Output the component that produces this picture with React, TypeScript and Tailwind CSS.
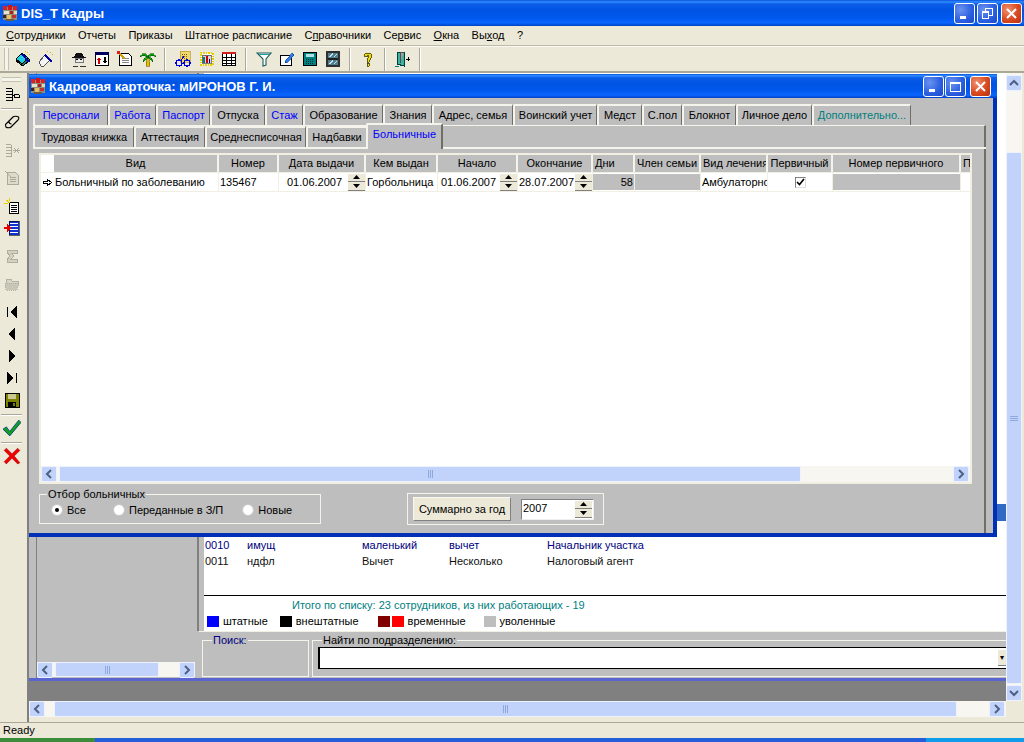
import type { ReactNode } from 'react';

const captionBar =
  'bg-[linear-gradient(to_bottom,#0a50d8_0%,#2f8bff_7%,#0a5ce8_16%,#0054e3_40%,#0058ee_70%,#0a66ff_88%,#0040c0_100%)]';

// small pixel-style icons, 16x16
const Px = ({ children, size = 16 }: { children: ReactNode; size?: number }) => (
  <svg width={size} height={size} viewBox="0 0 16 16" shapeRendering="crispEdges" className="block shrink-0">
    {children}
  </svg>
);

const AppIcon = () => (
  <Px>
    <rect x="1" y="2" width="14" height="13" fill="#8d8d7a" />
    <rect x="1" y="1" width="4" height="4" fill="#e02020" />
    <rect x="6" y="0" width="4" height="5" fill="#d01818" />
    <rect x="11" y="1" width="4" height="4" fill="#e02020" />
    <rect x="2" y="6" width="5" height="3" fill="#e8e0d0" />
    <rect x="8" y="6" width="3" height="3" fill="#b02020" />
    <rect x="12" y="6" width="3" height="3" fill="#e8d8a0" />
    <rect x="1" y="10" width="3" height="3" fill="#402020" />
    <rect x="5" y="10" width="4" height="4" fill="#e8c060" />
    <rect x="10" y="10" width="4" height="3" fill="#c03030" />
    <rect x="4" y="14" width="8" height="2" fill="#6a5a4a" />
  </Px>
);

const icons: Record<string, ReactNode> = {
  stack: (
    <>
      <path d="M1 10 L8 3 L15 9 L8 15 Z" fill="#1c7c7c" stroke="#000" />
      <path d="M1 8 L7 2 L13 7 L7 13 Z" fill="#20d0e0" stroke="#000" />
      <path d="M7 3 L14 11" stroke="#0000a0" strokeWidth="2" />
      <rect x="12" y="1" width="1" height="1" fill="#e0b000" />
      <rect x="14" y="3" width="1" height="1" fill="#e0b000" />
      <rect x="10" y="0" width="1" height="1" fill="#e0b000" />
    </>
  ),
  wand: (
    <>
      <path d="M1 11 L7 4 L12 9 L6 15 L3 15 Z" fill="#f4f4f4" stroke="#555" />
      <path d="M7 4 L14 11" stroke="#0000a0" strokeWidth="2" />
      <rect x="12" y="1" width="1" height="1" fill="#e0b000" />
      <rect x="14" y="3" width="1" height="1" fill="#e0b000" />
      <rect x="9" y="0" width="1" height="1" fill="#e0b000" />
    </>
  ),
  person: (
    <>
      <path d="M3 6 L5 2 H11 L13 6 H15 V7 H1 V6 Z" fill="#111" />
      <rect x="4" y="7" width="8" height="4" fill="#eee" stroke="#777" />
      <rect x="5" y="8" width="2" height="1" fill="#000" />
      <rect x="9" y="8" width="2" height="1" fill="#000" />
      <path d="M2 15 H7 M9 15 H15" stroke="#333" />
    </>
  ),
  arrows: (
    <>
      <rect x="1.5" y="1.5" width="13" height="13" fill="#fff" stroke="#000" />
      <rect x="1" y="1" width="14" height="3" fill="#000060" />
      <path d="M5 6 L3 9 H7 Z M4 9 H6 V13 H4 Z" fill="#d00000" />
      <path d="M10 6 H12 V10 H10 Z M9 10 H13 L11 13 Z" fill="#000" />
    </>
  ),
  docpen: (
    <>
      <path d="M2.5 2.5 H11.5 L14.5 5.5 V14.5 H2.5 Z" fill="#fff" stroke="#000" />
      <path d="M5 7 H12 M5 9 H12 M5 11 H12" stroke="#888" />
      <path d="M1 1 L8 8" stroke="#d0a000" strokeWidth="2" />
      <rect x="0" y="0" width="3" height="3" fill="#e02020" />
    </>
  ),
  palm: (
    <>
      <path d="M7 6 H9 L10 15 H6 Z" fill="#e0c000" stroke="#604000" strokeWidth="0.5" />
      <path d="M8 5 C5 1 2 2 0 6 C3 4 5 5 8 6 Z M8 5 C11 1 14 2 16 6 C13 4 11 5 8 6 Z" fill="#00a000" stroke="#004000" strokeWidth="0.5" />
      <path d="M8 6 C5 6 3 8 3 11 C5 9 6 8 8 7 Z M8 6 C11 6 13 8 13 11 C11 9 10 8 8 7 Z" fill="#10c020" stroke="#004000" strokeWidth="0.5" />
    </>
  ),
  glasses: (
    <>
      <rect x="5" y="0" width="10" height="11" fill="#f0d870" stroke="#a08000" strokeWidth="0.5" />
      <path d="M7 3 H13 M7 5 H13 M7 7 H13" stroke="#806000" strokeDasharray="1 1" />
      <circle cx="4" cy="12" r="3" fill="none" stroke="#0000e0" strokeWidth="1.2" />
      <circle cx="12" cy="12" r="3" fill="none" stroke="#0000e0" strokeWidth="1.2" />
      <path d="M6 10 L9 5 M7 12 H9" stroke="#0000e0" />
    </>
  ),
  chart: (
    <>
      <rect x="2.5" y="1.5" width="12" height="12" fill="#fff" stroke="#e8d000" strokeWidth="2" strokeDasharray="1.5 1" />
      <rect x="4" y="4" width="9" height="8" fill="#d8d8d8" stroke="#000" strokeWidth="0.5" />
      <rect x="5" y="6" width="2" height="6" fill="#008080" />
      <rect x="8" y="5" width="2" height="7" fill="#d00000" />
      <rect x="11" y="8" width="1" height="4" fill="#000080" />
    </>
  ),
  table: (
    <>
      <rect x="1.5" y="1.5" width="13" height="13" fill="#fff" stroke="#000" />
      <rect x="1" y="1" width="14" height="2" fill="#d02020" />
      <path d="M5.5 3 V14 M10.5 3 V14 M2 6.5 H14 M2 9.5 H14 M2 12.5 H14" stroke="#000" />
    </>
  ),
  funnel: (
    <>
      <path d="M1 2 H15 L10 8 V14 L7 15 V8 Z" fill="#fff" stroke="#1c5c5c" shapeRendering="auto" strokeWidth="1.1" />
      <path d="M3 3 H13" stroke="#20a0a0" />
    </>
  ),
  pagepen: (
    <>
      <rect x="1.5" y="4.5" width="11" height="10" fill="#fff" stroke="#000" />
      <path d="M7 9 L13 2 L15 4 L9 11 L6 12 Z" fill="#3080e0" stroke="#003090" strokeWidth="0.6" />
    </>
  ),
  calc: (
    <>
      <rect x="1.5" y="1.5" width="13" height="13" fill="#008080" stroke="#000" />
      <rect x="4" y="3" width="8" height="3" fill="#b0e0e0" />
      <path d="M4 8 H12 M4 10 H12 M4 12 H12" stroke="#003030" strokeDasharray="1 1" />
    </>
  ),
  panes: (
    <>
      <rect x="1" y="0" width="14" height="16" fill="#303030" />
      <rect x="3" y="2" width="10" height="12" fill="#508090" />
      <rect x="3" y="7" width="10" height="2" fill="#202020" />
      <path d="M4 6 L8 3 M9 6 L12 3 M4 13 L8 10 M9 13 L12 10" stroke="#c0e0f0" strokeWidth="1.4" />
    </>
  ),
  help: (
    <path d="M4 5 C4 1 12 1 12 5 C12 8 9 8 9 11 H7 C7 7 9 7 9 5 C9 4 7 4 7 6 Z M7 12 H9 V15 H7 Z" fill="#f0e000" stroke="#403800" strokeWidth="0.8" />
  ),
  door: (
    <>
      <path d="M2 1 H9 V15 L2 13 Z" fill="#40b0a0" stroke="#004040" />
      <path d="M9 1 H5 V12" fill="#a0a0a0" stroke="#505050" />
      <path d="M11 8 H15 M13 6 V10" stroke="#000" />
      <path d="M0 15 H4" stroke="#008080" />
    </>
  ),
  tree: (
    <path d="M2 2.5 H8 M2 5.5 H8 M2 8.5 H8 M2 11.5 H8 M2 14.5 H8 M8 2.5 V14.5 M8 9.5 H10 M10 8.5 H15 M10 11.5 H15 M10 8.5 V11.5 M15 8.5 V11.5" stroke="#000" fill="none" />
  ),
  eraser: (
    <path d="M1.5 10.5 L9 3 C10 2 13 2 14.5 3 C15 4 15 5 14 6 L7 13 C6 14 3 14 2 13 C1.5 12.5 1.5 11 1.5 10.5 Z M5 7.5 C5 9 6 10 7.5 10" fill="none" stroke="#000" strokeWidth="1.1" shapeRendering="auto" />
  ),
  treeOff: (
    <path d="M2 2.5 H7 M2 5.5 H7 M2 8.5 H7 M2 11.5 H7 M2 14.5 H7 M7 2.5 V14.5 M10 6 L15 11 M15 6 L10 11 M9 8.5 H16" stroke="#aaa99a" fill="none" />
  ),
  docOff: (
    <>
      <path d="M3.5 2.5 H11.5 L14.5 5.5 V14.5 H3.5 Z" fill="#dedbca" stroke="#aaa99a" />
      <path d="M6 7 H12 M6 9 H12 M6 11 H12 M1 1 L8 8" stroke="#aaa99a" />
    </>
  ),
  newdoc: (
    <>
      <path d="M5.5 4.5 H14.5 V15.5 H5.5 Z" fill="#fff" stroke="#000" />
      <path d="M7 7 H13 M7 9 H13 M7 11 H13 M7 13 H13" stroke="#000" />
      <path d="M2 2 L6 5 M5 0 L6 3 M0 5 L4 6" stroke="#e8d000" />
    </>
  ),
  addlist: (
    <>
      <rect x="5" y="1" width="10" height="14" fill="#1030d0" stroke="#000" strokeWidth="0.6" />
      <path d="M6 3.5 H14 M6 6.5 H14 M6 9.5 H14 M6 12.5 H14" stroke="#fff" />
      <path d="M0 7 H3 V4 L7 8 L3 12 V9 H0 Z" fill="#e00000" />
    </>
  ),
  sigma: <path d="M3 2 H13 V5 H7 L10 8 L7 11 H13 V14 H3 V12 L6 8 L3 4 Z" fill="#d4d1c0" stroke="#b0ae9e" />,
  folderOff: (
    <>
      <path d="M2 3 H7 L8 5 H14 V7 H2 Z" fill="#d8d5c4" stroke="#b4b2a2" />
      <path d="M1 7 H15 L13 14 H2 Z" fill="#c8c6b6" stroke="#b4b2a2" strokeDasharray="1 1" />
    </>
  ),
  first: <path d="M3 3 H4 V13 H3 Z M13 2 V14 L6 8 Z" fill="#000" />,
  prev: <path d="M11 2 V14 L4 8 Z" fill="#000" />,
  next: <path d="M5 2 V14 L12 8 Z" fill="#000" />,
  last: <path d="M12 3 H13 V13 H12 Z M3 2 V14 L10 8 Z" fill="#000" />,
  floppy: (
    <>
      <rect x="1" y="1" width="14" height="14" fill="#808000" stroke="#000" />
      <rect x="4" y="2" width="8" height="5" fill="#c8c890" />
      <rect x="4" y="10" width="8" height="5" fill="#000" />
      <rect x="9" y="11" width="2" height="3" fill="#808000" />
    </>
  ),
  check: <path d="M0 9 L3 7 L6 11 L14 1 L16 3 L6 15 Z" fill="#10a020" stroke="#003080" strokeWidth="0.7" shapeRendering="auto" />,
  cross: <path d="M1 3 L3 1 L8 6 L13 1 L15 3 L10 8 L15 14 L13 15 L8 10 L3 15 L1 13 L6 8 Z" fill="#f00000" stroke="#900000" strokeWidth="0.4" shapeRendering="auto" />,
};

const WinBtn = ({ kind, mark }: { kind: 'blue' | 'red'; mark: 'min' | 'max' | 'restore' | 'close' }) => (
  <div
    className={`w-[21px] h-[21px] rounded-[3px] border border-white flex items-center justify-center ${
      kind === 'red'
        ? 'bg-[radial-gradient(circle_at_30%_30%,#f09070,#d84a20_55%,#b83010)]'
        : 'bg-[radial-gradient(circle_at_30%_30%,#6a92ef,#2a5ee0_60%,#1a48c8)]'
    }`}
  >
    <svg width="13" height="13" viewBox="0 0 13 13" shapeRendering="crispEdges">
      {mark === 'min' && <rect x="2" y="9" width="6" height="3" fill="#fff" />}
      {mark === 'max' && <path d="M1.5 3.5 H11.5 V11.5 H1.5 Z M1 2.5 H12" fill="none" stroke="#fff" />}
      {mark === 'restore' && <path d="M1.5 5.5 H7.5 V11.5 H1.5 Z M1 4.5 H8 M4.5 4 V1.5 H11.5 V8 H8 M4 1 H12" fill="none" stroke="#fff" />}
      {mark === 'close' && <path d="M2 2 L11 11 M11 2 L2 11" stroke="#fff" strokeWidth="2" shapeRendering="auto" />}
    </svg>
  </div>
);

const Chevron = ({ dir }: { dir: 'left' | 'right' | 'up' | 'down' }) => {
  const d = {
    left: 'M7 1 L3 5 L7 9',
    right: 'M3 1 L7 5 L3 9',
    up: 'M1 7 L5 3 L9 7',
    down: 'M1 3 L5 7 L9 3',
  }[dir];
  return (
    <svg width="10" height="10" viewBox="0 0 10 10">
      <path d={d} fill="none" stroke="#4d6185" strokeWidth="2" />
    </svg>
  );
};

const ScrollBtn = ({ dir }: { dir: 'left' | 'right' | 'up' | 'down' }) => (
  <div className="w-[16px] h-[16px] shrink-0 rounded-[2px] border border-[#eef2ff] bg-[#c1d3fb] flex items-center justify-center">
    <Chevron dir={dir} />
  </div>
);

const Grip = ({ vertical = false }: { vertical?: boolean }) => (
  <svg width={vertical ? 8 : 7} height={vertical ? 7 : 8} viewBox={vertical ? '0 0 8 7' : '0 0 7 8'} shapeRendering="crispEdges">
    {vertical ? (
      <path d="M0 1.5 H8 M0 3.5 H8 M0 5.5 H8" stroke="#8fa8e0" />
    ) : (
      <path d="M1.5 0 V8 M3.5 0 V8 M5.5 0 V8" stroke="#8fa8e0" />
    )}
  </svg>
);

const Spin = () => (
  <div className="w-[17px] h-[17px] flex flex-col shrink-0">
    <div className="h-[8px] bg-[#ece9d8] border-b border-[#808080] flex items-center justify-center">
      <svg width="7" height="4" viewBox="0 0 7 4"><path d="M3.5 0 L7 4 H0 Z" fill="#000" /></svg>
    </div>
    <div className="h-[9px] bg-[#ece9d8] border-b border-[#808080] flex items-center justify-center">
      <svg width="7" height="4" viewBox="0 0 7 4"><path d="M0 0 H7 L3.5 4 Z" fill="#000" /></svg>
    </div>
  </div>
);

const menu: { pre: string; u: string; post: string }[] = [
  { pre: '', u: 'С', post: 'отрудники' },
  { pre: 'Отчеты', u: '', post: '' },
  { pre: 'Приказы', u: '', post: '' },
  { pre: 'Штатное расписание', u: '', post: '' },
  { pre: 'С', u: 'п', post: 'равочники' },
  { pre: 'Се', u: 'р', post: 'вис' },
  { pre: '', u: 'О', post: 'кна' },
  { pre: 'Вы', u: 'х', post: 'од' },
  { pre: '?', u: '', post: '' },
];

const tabsTop = [
  { t: 'Персонали', w: 'w-[75px]', c: 'text-[#0000ff]' },
  { t: 'Работа', w: 'w-[48px]', c: 'text-[#0000ff]' },
  { t: 'Паспорт', w: 'w-[54px]', c: 'text-[#0000ff]' },
  { t: 'Отпуска', w: 'w-[55px]', c: 'text-black' },
  { t: 'Стаж', w: 'w-[38px]', c: 'text-[#0000ff]' },
  { t: 'Образование', w: 'w-[80px]', c: 'text-black' },
  { t: 'Знания', w: 'w-[49px]', c: 'text-black' },
  { t: 'Адрес, семья', w: 'w-[81px]', c: 'text-black' },
  { t: 'Воинский учет', w: 'w-[84px]', c: 'text-black' },
  { t: 'Медст', w: 'w-[45px]', c: 'text-black' },
  { t: 'С.пол', w: 'w-[40px]', c: 'text-black' },
  { t: 'Блокнот', w: 'w-[54px]', c: 'text-black' },
  { t: 'Личное дело', w: 'w-[76px]', c: 'text-black' },
  { t: 'Дополнительно...', w: 'w-[99px]', c: 'text-[#008080]' },
];

const tabsSub = [
  { t: 'Трудовая книжка', w: 'w-[101px]' },
  { t: 'Аттестация', w: 'w-[71px]' },
  { t: 'Среднесписочная', w: 'w-[101px]' },
  { t: 'Надбавки', w: 'w-[61px]' },
];

const Tab = ({ t, w, c = 'text-black', h = 'h-[21px]' }: { t: string; w: string; c?: string; h?: string }) => (
  <div
    className={`${w} ${h} ${c} shrink-0 rounded-t-[2px] border-t-2 border-l-2 border-r border-t-[#f4f3ec] border-l-[#f4f3ec] border-r-[#6f6f66] flex items-center justify-center whitespace-nowrap overflow-hidden`}
  >
    {t}
  </div>
);

const columns = [
  { t: 'Вид', w: 'w-[165px]', a: 'justify-center' },
  { t: 'Номер', w: 'w-[60px]', a: 'justify-center' },
  { t: 'Дата выдачи', w: 'w-[87px]', a: 'justify-center' },
  { t: 'Кем выдан', w: 'w-[72px]', a: 'justify-center' },
  { t: 'Начало', w: 'w-[80px]', a: 'justify-center' },
  { t: 'Окончание', w: 'w-[75px]', a: 'justify-center' },
  { t: 'Дни', w: 'w-[42px]', a: 'justify-start pl-[2px]' },
  { t: 'Член семьи', w: 'w-[66px]', a: 'justify-start pl-[2px]' },
  { t: 'Вид лечения', w: 'w-[67px]', a: 'justify-start pl-[2px]' },
  { t: 'Первичный', w: 'w-[65px]', a: 'justify-center' },
  { t: 'Номер первичного', w: 'w-[128px]', a: 'justify-center' },
  { t: 'П', w: 'w-[13px]', a: 'justify-start pl-[2px]' },
];

const Cell = ({ w, className = '', children }: { w: string; className?: string; children?: ReactNode }) => (
  <div className={`${w} shrink-0 h-full border-r border-[#f1efe2] flex items-center overflow-hidden whitespace-nowrap ${className}`}>
    {children}
  </div>
);

const GrayFill = ({ children }: { children?: ReactNode }) => (
  <div className="w-full h-[16px] bg-[#bebebe] flex items-center justify-end pr-[1px]">{children}</div>
);

const Group = ({ legend, w, className = '', legendClass = 'text-black left-[7px]', children }: { legend: string; w: string; className?: string; legendClass?: string; children?: ReactNode }) => (
  <div className={`${w} relative border border-[#f4f3ec] ${className}`}>
    <span className={`absolute -top-[7px] bg-[#bebebe] px-px leading-[12px] ${legendClass}`}>{legend}</span>
    {children}
  </div>
);

const Radio = ({ on = false, label, className = '' }: { on?: boolean; label: string; className?: string }) => (
  <div className={`flex items-center ${className}`}>
    <div className="w-[12px] h-[12px] rounded-full bg-white border border-[#c8c8c8] flex items-center justify-center mr-[4px]">
      {on && <div className="w-[4px] h-[4px] rounded-full bg-black" />}
    </div>
    {label}
  </div>
);

const listRows = [
  { code: '0010', a: 'имущ', b: 'маленький', c: 'вычет', d: 'Начальник участка', color: 'text-[#000080]' },
  { code: '0011', a: 'ндфл', b: 'Вычет', c: 'Несколько', d: 'Налоговый агент', color: 'text-[#101010]' },
];

const legend = [
  { swatches: ['bg-[#0000ff]'], label: 'штатные', cls: '' },
  { swatches: ['bg-black'], label: 'внештатные', cls: 'ml-[12px]' },
  { swatches: ['bg-[#800000]', 'bg-[#ff0000]'], label: 'временные', cls: 'ml-[19px]' },
  { swatches: ['bg-[#bebebe]'], label: 'уволенные', cls: 'ml-[18px]' },
];

const topIcons = ['stack', 'wand', null, 'person', 'arrows', 'docpen', 'palm', null, 'glasses', 'chart', 'table', null, 'funnel', 'pagepen', 'calc', 'panes', null, 'help', null, 'door', null];

const sideIcons = [
  { k: 'tree', m: 'mt-[2px]' },
  { k: 'eraser', m: 'mt-[8px]', sep: true },
  { k: 'treeOff', m: 'mt-[8px]' },
  { k: 'docOff', m: 'mt-[8px]' },
  { k: 'newdoc', m: 'mt-[8px]' },
  { k: 'addlist', m: 'mt-[2px]' },
  { k: 'sigma', m: 'mt-[8px]' },
  { k: 'folderOff', m: 'mt-[8px]' },
  { k: 'first', m: 'mt-[8px]' },
  { k: 'prev', m: 'mt-[2px]' },
  { k: 'next', m: 'mt-[2px]' },
  { k: 'last', m: 'mt-[2px]' },
  { k: 'floppy', m: 'mt-[2px]' },
  { k: 'check', m: 'mt-[8px]', sep: true },
  { k: 'cross', m: 'mt-[8px]', sep: true },
];

const CardWindow = () => (
  <div className="absolute left-0 top-[1px] w-[968px] h-[463px] flex flex-col bg-[#bebebe] border-r-4 border-b-4 border-[#0030b8]">
    <div className={`h-[24px] shrink-0 ${captionBar} flex items-center pl-[1px] pr-[1px] -mr-[4px]`}>
      <AppIcon />
      <span className="ml-[3px] text-white font-bold text-[13px] leading-none">Кадровая карточка: мИРОНОВ Г. И.</span>
      <div className="ml-auto flex gap-[1px] pr-[5px]">
        <WinBtn kind="blue" mark="min" />
        <WinBtn kind="blue" mark="max" />
        <div className="ml-[3px]"><WinBtn kind="red" mark="close" /></div>
      </div>
    </div>
    <div className="flex-1 pl-[4px] pr-[7px] pt-[6px] flex flex-col min-h-0">
      <div className="flex h-[21px] shrink-0 relative">
        {tabsTop.map((tab) => (
          <Tab key={tab.t} t={tab.t} w={tab.w} c={tab.c} />
        ))}
      </div>
      <div className="flex h-[22px] shrink-0 border-t border-[#f4f3ec] border-r-2 border-r-[#6f6f66] relative">
        {tabsSub.map((tab) => (
          <Tab key={tab.t} t={tab.t} w={tab.w} h="h-[21px]" />
        ))}
        <div className="absolute left-[333px] -top-[3px] z-10 w-[77px] h-[26px] bg-[#bebebe] rounded-t-[2px] border-t-2 border-l-2 border-r-2 border-t-[#f4f3ec] border-l-[#f4f3ec] border-r-[#6f6f66] flex items-center justify-center text-[#0000ff] pb-[5px]">
          Больничные
        </div>
      </div>
      <div className="h-[2px] shrink-0 bg-[#f4f3ec] mr-0" />
      <div className="flex-1 min-h-0 pl-[6px] pr-[12px] pt-[4px] flex flex-col border-r-2 border-r-[#6f6f66]">
        <div className="h-[331px] shrink-0 bg-white border-2 border-[#f1efe2] flex flex-col overflow-hidden">
          <div className="flex h-[18px] shrink-0 border-b border-[#f1efe2] pl-[13px]">
            {columns.map((col) => (
              <div key={col.t} className={`${col.w} ${col.a} shrink-0 h-full bg-[#bebebe] border-r-2 border-[#f4f3ec] flex items-center overflow-hidden whitespace-nowrap`}>
                {col.t}
              </div>
            ))}
          </div>
          <div className="flex h-[19px] shrink-0 border-b border-[#f1efe2]">
            <div className="w-[13px] shrink-0 flex items-center justify-center">
              <svg width="9" height="7" viewBox="0 0 9 7" shapeRendering="crispEdges">
                <path d="M0.5 2.5 H4.5 V0.5 L8.5 3.5 L4.5 6.5 V4.5 H0.5 Z" fill="#fff" stroke="#000" />
              </svg>
            </div>
            <Cell w="w-[165px]" className="pl-[1px]">Больничный по заболеванию</Cell>
            <Cell w="w-[60px]" className="pl-[1px]">135467</Cell>
            <Cell w="w-[87px]" className="pl-[8px] justify-between">01.06.2007<Spin /></Cell>
            <Cell w="w-[72px]" className="pl-[1px]">Горбольница</Cell>
            <Cell w="w-[80px]" className="pl-[3px] justify-between">01.06.2007<Spin /></Cell>
            <Cell w="w-[75px]" className="pl-[1px] justify-between">28.07.2007<Spin /></Cell>
            <Cell w="w-[42px]"><GrayFill>58</GrayFill></Cell>
            <Cell w="w-[66px]"><GrayFill /></Cell>
            <Cell w="w-[67px]" className="pl-[1px]">Амбулаторно</Cell>
            <Cell w="w-[65px]" className="justify-center">
              <div className="w-[11px] h-[11px] border border-t-[#808080] border-l-[#808080] border-r-[#ddd] border-b-[#ddd] flex items-center justify-center">
                <svg width="9" height="8" viewBox="0 0 9 8"><path d="M1 4 L3.5 6.5 L8 1" fill="none" stroke="#000" strokeWidth="1.6" /></svg>
              </div>
            </Cell>
            <Cell w="w-[128px]"><GrayFill /></Cell>
          </div>
          <div className="flex-1" />
          <div className="h-[16px] shrink-0 flex items-center bg-[#f7f6f0]">
            <ScrollBtn dir="left" />
            <div className="ml-[2px] w-[742px] h-[16px] rounded-[2px] border border-[#eef2ff] bg-[#c1d3fb] flex items-center justify-center"><Grip /></div>
            <div className="flex-1" />
            <ScrollBtn dir="right" />
            <div className="w-[1px]" />
          </div>
        </div>
        <div className="flex mt-[10px]">
          <Group legend="Отбор больничных" w="w-[282px]" className="h-[30px] flex items-center pl-[11px] pt-[2px]">
            <Radio on label="Все" />
            <Radio label="Переданные в З/П" className="ml-[27px]" />
            <Radio label="Новые" className="ml-[19px]" />
          </Group>
          <div className="ml-[86px] w-[197px] h-[32px] -mt-[1px] border border-[#f4f3ec] flex items-center pl-[5px]">
            <div className="w-[98px] h-[24px] bg-[#ece9d8] border border-[#f8f7f0] border-r-[#808080] border-b-[#808080] flex items-center justify-center">Суммарно за год</div>
            <div className="ml-[10px] w-[73px] h-[21px] bg-white border border-[#808080] border-r-[#eee] border-b-[#eee] flex items-start pl-[1px] pr-[1px] justify-between">
              <span className="leading-[16px]">2007</span>
              <div className="mt-[1px]"><Spin /></div>
            </div>
          </div>
        </div>
      </div>
    </div>
  </div>
);

const BackWindow = () => (
  <div className="h-[608px] flex flex-col shrink-0 bg-[#bebebe]">
    <div className="flex-1 flex min-h-0">
      <div className="w-[8px] shrink-0 border-r border-[#808080]" />
      <div className="w-[160px] shrink-0 flex flex-col justify-end pb-[1px] pr-[2px]">
        <div className="h-[15px] flex items-center bg-[#f7f6f0]">
          <ScrollBtn dir="left" />
          <div className="ml-[2px] w-[104px] h-[15px] rounded-[2px] border border-[#eef2ff] bg-[#c1d3fb] flex items-center justify-center"><Grip /></div>
          <div className="flex-1" />
          <ScrollBtn dir="right" />
        </div>
      </div>
      <div className="w-[2px] shrink-0 bg-[#808080] h-[558px]" />
      <div className="flex-1 flex flex-col min-w-0">
        <div className="flex h-[558px] shrink-0">
          <div className="w-[5px] shrink-0" />
          <div className="flex-1 bg-white flex flex-col">
            <div className="h-[431px] shrink-0" />
            <div className="h-[17px] shrink-0 bg-[#316ac5]" />
            <div className="h-[16px] shrink-0" />
            {listRows.map((row) => (
              <div key={row.code} className={`flex h-[16px] shrink-0 items-center ${row.color}`}>
                <span className="w-[43px] pl-[1px]">{row.code}</span>
                <span className="w-[115px]">{row.a}</span>
                <span className="w-[87px]">{row.b}</span>
                <span className="w-[98px]">{row.c}</span>
                <span>{row.d}</span>
              </div>
            ))}
            <div className="h-[26px] shrink-0" />
            <div className="h-[1px] shrink-0 bg-black" />
            <div className="h-[18px] shrink-0 flex items-center pl-[88px] text-[#008080]">Итого по списку: 23 сотрудников, из них работающих - 19</div>
            <div className="flex items-center pl-[3px] h-[14px] shrink-0">
              {legend.map((item) => (
                <div key={item.label} className={`flex items-center ${item.cls}`}>
                  {item.swatches.map((s) => (
                    <div key={s} className={`w-[12px] h-[11px] mr-[2px] ${s}`} />
                  ))}
                  <span className="ml-[2px]">{item.label}</span>
                </div>
              ))}
            </div>
          </div>
        </div>
        <div className="flex-1 flex pt-[8px] pl-[3px] border-t border-[#f1efe2] min-h-0 gap-[3px]">
          <Group legend="Поиск:" w="w-[107px]" className="h-[37px]" legendClass="text-[#000080] left-[9px]" />
          <Group legend="Найти по подразделению:" w="flex-1" className="h-[37px] border-r-0 pl-[5px] pt-[6px]" legendClass="text-black left-[9px]">
            <div className="h-[22px] bg-white border-y border-l-2 border-y-black border-l-black relative">
              <div className="absolute right-0 top-[2px] w-[8px] h-[16px] bg-[#ece9d8] border-b border-[#808080] flex items-center justify-center text-[8px] leading-none">▾</div>
            </div>
          </Group>
        </div>
      </div>
    </div>
    <div className="h-[3px] shrink-0 bg-[#5a64d0]" />
  </div>
);

export default function App() {
  return (
    <div className="w-[1024px] h-[742px] overflow-hidden flex flex-col bg-[#ece9d8] font-['Liberation_Sans',Arial,sans-serif] text-[11px] leading-[13px] text-black">
      {/* main caption */}
      <div className={`h-[26px] shrink-0 flex items-center pl-[2px] pr-[2px] ${captionBar}`}>
        <AppIcon />
        <span className="ml-[3px] text-white font-bold text-[13px] leading-none">DIS_T Кадры</span>
        <div className="ml-auto flex gap-[2px] items-center">
          <WinBtn kind="blue" mark="min" />
          <WinBtn kind="blue" mark="restore" />
          <div className="ml-[1px]"><WinBtn kind="red" mark="close" /></div>
        </div>
      </div>

      {/* menu */}
      <div className="h-[19px] shrink-0 flex items-center pl-[6px] gap-[12.4px]">
        {menu.map((m) => (
          <span key={m.pre + m.u + m.post} className="whitespace-nowrap">
            {m.pre}
            {m.u && <u>{m.u}</u>}
            {m.post}
          </span>
        ))}
      </div>
      <div className="h-[2px] shrink-0 border-t border-[#aca899] border-b border-b-white opacity-70" />

      {/* toolbar */}
      <div className="h-[26px] shrink-0 flex items-center border-b-2 border-[#aca899] pl-[4px]">
        <div className="w-[5px] h-[22px] mr-[2px] border-x border-[#c4c1ae] bg-[#f4f3ec]" />
        {topIcons.map((k, i) =>
          k ? (
            <div key={k} className="w-[23px] flex justify-center"><Px>{icons[k]}</Px></div>
          ) : (
            <div key={i} className={`w-[2px] h-[23px] border-l border-[#aca899] border-r border-r-white ${i === 2 ? 'ml-[3px] mr-[5px]' : 'mx-[5px]'}`} />
          ),
        )}
      </div>

      <div className="flex-1 flex min-h-0">
        {/* left toolbar */}
        <div className="w-[27px] shrink-0 pr-[4px]">
          <div className="mt-[4px] mx-[2px] h-[5px] border-y border-[#c4c1ae] bg-[#f4f3ec]" />
          <div className="flex flex-col items-center">
            {sideIcons.map((s) => (
              <div key={s.k} className="flex flex-col items-center w-full">
                {s.sep && <div className="w-[21px] h-[2px] border-t border-[#aca899] border-b border-b-white mt-[4px] -mb-[6px]" />}
                <div className={`${s.m} h-[20px] flex items-center`}><Px size={s.k === 'check' || s.k === 'cross' ? 18 : 16}>{icons[s.k]}</Px></div>
              </div>
            ))}
          </div>
        </div>
        <div className="w-[2px] shrink-0 bg-[#808080]" />

        <div className="w-[977px] shrink-0 flex flex-col">
          <div className="relative flex-1 flex flex-col min-h-0">
            <BackWindow />
            <div className="h-[20px] shrink-0 bg-[#808080]" />
            <div className="h-[16px] shrink-0 flex items-center bg-[#f7f6f0]">
              <ScrollBtn dir="left" />
              <div className="ml-[9px] w-[903px] h-[16px] rounded-[2px] border border-[#eef2ff] bg-[#c1d3fb] flex items-center justify-center"><Grip /></div>
              <div className="flex-1" />
              <ScrollBtn dir="right" />
              <div className="w-[1px]" />
            </div>
            <CardWindow />
          </div>
          <div className="h-[4px] shrink-0" />
        </div>

        {/* right scrollbar */}
        <div className="w-[16px] shrink-0 flex flex-col">
          <div className="pt-[2px] bg-[#f7f6f0] flex-1 flex flex-col">
            <ScrollBtn dir="up" />
            <div className="h-[61px] shrink-0" />
            <div className="h-[532px] shrink-0 rounded-[2px] border border-[#eef2ff] bg-[#c1d3fb] flex items-center justify-center"><Grip vertical /></div>
            <div className="h-[1px] shrink-0" />
            <ScrollBtn dir="down" />
          </div>
          <div className="h-[21px] shrink-0 bg-[#ece9d8]" />
        </div>
      </div>

      {/* status */}
      <div className="h-[16px] shrink-0 border-t border-[#aca899] flex items-center pl-[3px]">Ready</div>
      <div className="h-[4px] shrink-0 flex">
        <div className="w-[95px] bg-[#3c8c3c]" />
        <div className="flex-1 bg-[#245edb]" />
        <div className="w-[98px] bg-[#0f9ceb]" />
      </div>
    </div>
  );
}
